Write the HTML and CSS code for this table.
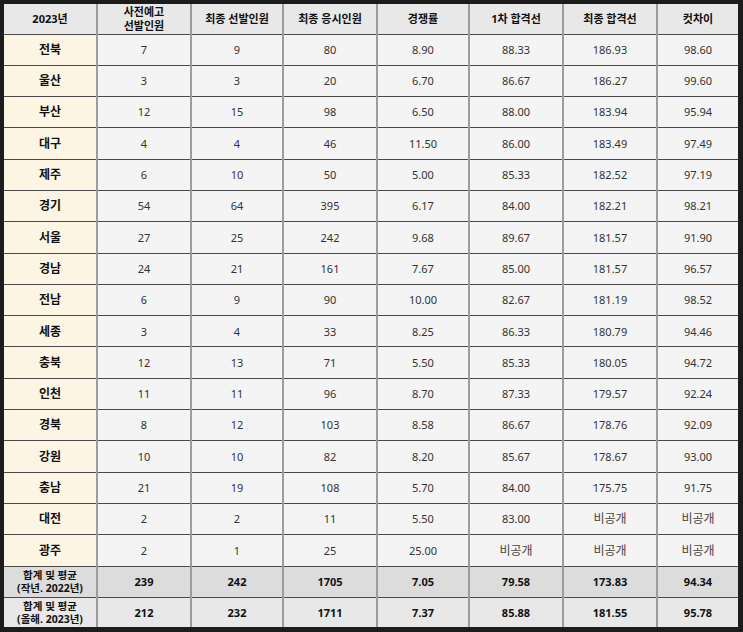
FILE: index.html
```html
<!DOCTYPE html>
<html lang="ko">
<head>
<meta charset="utf-8">
<title>2023년 합격선</title>
<link rel="stylesheet" href="styles.css">
</head>
<body>
<table class="tbl">
<colgroup>
<col class="c1"><col class="c2"><col class="c3"><col class="c4"><col class="c5"><col class="c6"><col class="c7"><col class="c8">
</colgroup>
<thead>
<tr class="head">
<th>2023년</th><th>사전예고<br>선발인원</th><th>최종 선발인원</th><th>최종 응시인원</th><th>경쟁률</th><th>1차 합격선</th><th>최종 합격선</th><th>컷차이</th>
</tr>
</thead>
<tbody>
<tr><th>전북</th><td>7</td><td>9</td><td>80</td><td>8.90</td><td>88.33</td><td>186.93</td><td>98.60</td></tr>
<tr><th>울산</th><td>3</td><td>3</td><td>20</td><td>6.70</td><td>86.67</td><td>186.27</td><td>99.60</td></tr>
<tr><th>부산</th><td>12</td><td>15</td><td>98</td><td>6.50</td><td>88.00</td><td>183.94</td><td>95.94</td></tr>
<tr><th>대구</th><td>4</td><td>4</td><td>46</td><td>11.50</td><td>86.00</td><td>183.49</td><td>97.49</td></tr>
<tr><th>제주</th><td>6</td><td>10</td><td>50</td><td>5.00</td><td>85.33</td><td>182.52</td><td>97.19</td></tr>
<tr><th>경기</th><td>54</td><td>64</td><td>395</td><td>6.17</td><td>84.00</td><td>182.21</td><td>98.21</td></tr>
<tr><th>서울</th><td>27</td><td>25</td><td>242</td><td>9.68</td><td>89.67</td><td>181.57</td><td>91.90</td></tr>
<tr><th>경남</th><td>24</td><td>21</td><td>161</td><td>7.67</td><td>85.00</td><td>181.57</td><td>96.57</td></tr>
<tr><th>전남</th><td>6</td><td>9</td><td>90</td><td>10.00</td><td>82.67</td><td>181.19</td><td>98.52</td></tr>
<tr><th>세종</th><td>3</td><td>4</td><td>33</td><td>8.25</td><td>86.33</td><td>180.79</td><td>94.46</td></tr>
<tr><th>충북</th><td>12</td><td>13</td><td>71</td><td>5.50</td><td>85.33</td><td>180.05</td><td>94.72</td></tr>
<tr><th>인천</th><td>11</td><td>11</td><td>96</td><td>8.70</td><td>87.33</td><td>179.57</td><td>92.24</td></tr>
<tr><th>경북</th><td>8</td><td>12</td><td>103</td><td>8.58</td><td>86.67</td><td>178.76</td><td>92.09</td></tr>
<tr><th>강원</th><td>10</td><td>10</td><td>82</td><td>8.20</td><td>85.67</td><td>178.67</td><td>93.00</td></tr>
<tr><th>충남</th><td>21</td><td>19</td><td>108</td><td>5.70</td><td>84.00</td><td>175.75</td><td>91.75</td></tr>
<tr><th>대전</th><td>2</td><td>2</td><td>11</td><td>5.50</td><td>83.00</td><td class="na">비공개</td><td class="na">비공개</td></tr>
<tr><th>광주</th><td>2</td><td>1</td><td>25</td><td>25.00</td><td class="na">비공개</td><td class="na">비공개</td><td class="na">비공개</td></tr>
<tr class="sum1"><th>합계 및 평균<br>(작년. 2022년)</th><td>239</td><td>242</td><td>1705</td><td>7.05</td><td>79.58</td><td>173.83</td><td>94.34</td></tr>
<tr class="sum2"><th>합계 및 평균<br>(올해. 2023년)</th><td>212</td><td>232</td><td>1711</td><td>7.37</td><td>85.88</td><td>181.55</td><td>95.78</td></tr>
</tbody>
</table>
</body>
</html>
```

FILE: styles.css
```css
html, body {
  margin: 0;
  padding: 0;
  background: #1c1c1c;
}
body {
  padding: 4px 5px 5px 4px;
  font-family: "Noto Sans", "Noto Sans CJK KR", sans-serif;
  font-size: 11px;
  color: #333;
}
.tbl {
  width: 734px;
  border-collapse: collapse;
  table-layout: fixed;
  border: none;
}
.c1 { width: 93px; }
.c2 { width: 94px; }
.c3 { width: 92px; }
.c4 { width: 94px; }
.c5 { width: 92px; }
.c6 { width: 94px; }
.c7 { width: 94px; }
.c8 { width: 81px; }
.tbl th, .tbl td {
  padding: 0;
  text-align: center;
  vertical-align: middle;
  border-top: 1px solid #4a4a4a;
  border-bottom: 1px solid #4a4a4a;
  border-left: 2px solid #9c9c9c;
  border-right: 2px solid #9c9c9c;
  background: #f4f4f4;
  height: 30.3px;
  line-height: 13.5px;
}
.tbl th:first-child { border-left: none; }
.tbl th:last-child, .tbl td:last-child { border-right: none; }
.tbl thead th {
  border-top: none;
  background: #e8e8e8;
  color: #111;
  font-weight: 700;
  font-size: 11px;
  height: 29.5px;
}
.tbl tbody th {
  background: #fcf5e3;
  color: #111;
  font-weight: 700;
  font-size: 12px;
}
.tbl td.na {
  font-size: 12px;
  color: #444;
}
.tbl tr.sum1 th, .tbl tr.sum1 td {
  background: #dcdcdc;
  font-weight: 700;
  color: #111;
  font-size: 11px;
  height: 30.6px;
}
.tbl tr.sum2 th, .tbl tr.sum2 td {
  background: #e8e8e8;
  font-weight: 700;
  color: #111;
  font-size: 11px;
  border-bottom: none;
  height: 29px;
}
.tbl tr.sum1 th, .tbl tr.sum2 th {
  font-size: 10.5px;
  line-height: 13px;
}
```
